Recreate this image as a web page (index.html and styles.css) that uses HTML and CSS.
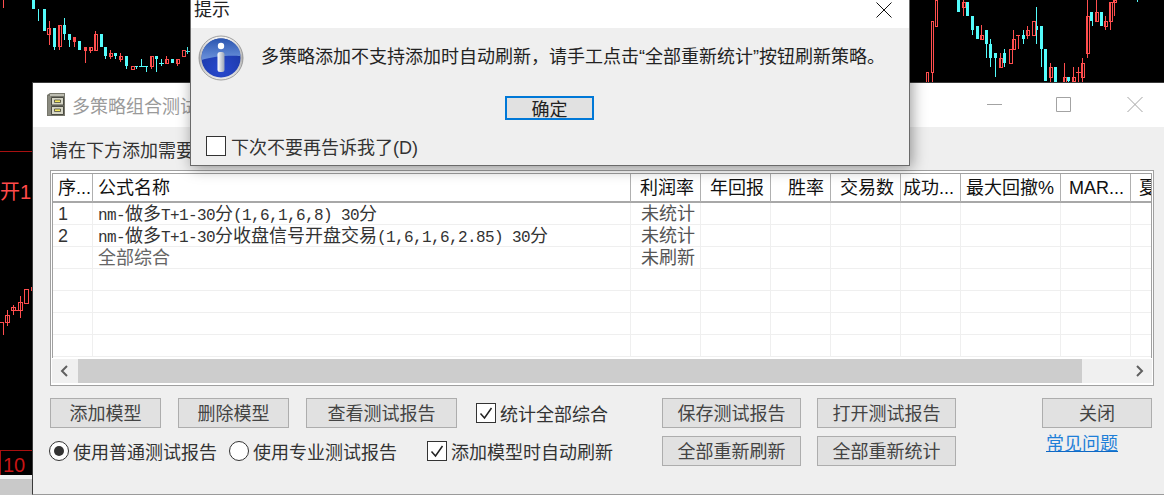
FILE: index.html
```html
<!DOCTYPE html>
<html lang="zh-CN">
<head>
<meta charset="utf-8">
<title>多策略组合测试</title>
<link rel="stylesheet" href="styles.css">
</head>
<body>
<div class="desktop">
  <svg class="chart" width="1164" height="495" viewBox="0 0 1164 495">
    <path class="up" d="M32 0h3v9h-3zM38 9h1v12h-1zM43 9h3v22h-3zM53 28h3v19h-3zM54 47h1v3h-1zM63 25h3v9h-3zM64 18h1v22h-1zM68 34h3v6h-3zM69 40h1v7h-1zM78 41h3v9h-3zM100 34h3v13h-3zM104 47h3v9h-3zM105 56h1v3h-1zM114 53h3v3h-3zM115 56h1v3h-1zM125 56h3v10h-3zM126 66h1v3h-1zM134 66h4v1h-4zM136 66h1v3h-1zM141 59h1v8h-1zM139 66h5v1h-5zM144 66h4v1h-4zM146 66h1v6h-1zM155 56h3v3h-3zM156 59h1v13h-1zM161 59h1v7h-1zM159 63h5v1h-5zM171 59h3v4h-3zM186 51h5v1h-5zM187 47h1v7h-1z"/>
    <path class="up" d="M957 0h3v12h-3zM966 2h3v14h-3zM971 16h3v14h-3zM972 30h1v5h-1zM976 26h3v13h-3zM985 30h3v14h-3zM986 44h1v14h-1zM989 44h3v14h-3zM990 39h1v28h-1zM994 53h3v5h-3zM995 58h1v19h-1zM1003 53h3v10h-3zM1004 49h1v18h-1zM1022 35h3v4h-3zM1023 30h1v14h-1zM1035 26h3v4h-3zM1036 7h1v37h-1zM1040 26h3v23h-3zM1041 49h1v18h-1zM1044 49h3v32h-3zM1054 67h3v16h-3zM1067 77h3v4h-3zM1068 81h1v2h-1zM1090 12h3v9h-3zM1092 21h1v5h-1zM1100 12h3v14h-3zM1137 0h1v2h-1z"/>
    <path class="down" d="M3.500 0V8M49.500 21V45M47.500 28h3v6h-3zM59.500 25V50M58 25h3v21h-3zM74.500 37V47M73 37h2v4h-2zM85.500 47V63M84 47h2v3h-2zM90.500 47V53M89 47h3v3h-3zM95.500 31V50M94 34h3v16h-3zM110.500 50V59M109 53h3v3h-3zM120.500 53V62M119 56h3v3h-3zM131 66h3v3h-3zM151.500 56V69M150 56h3v10h-3zM166.500 56V63M165 59h3v4h-3zM177.500 59V66M176 59h3v4h-3zM182 50h3v6h-3z"/>
    <path class="down" d="M926 72h2v11h-2zM931 21h2v51h-2zM932.500 72V83M935 0h2v26h-2zM963.500 0V16M962 2h3v5h-3zM981.500 25V39M980 35h3v4h-3zM1000.500 53V67M999 58h3v9h-3zM1013.500 30V49M1012 39h3v10h-3zM1009 49h3v14h-3zM1018 35V49M1016 35h4M1027.500 26V39M1026 30h3v5h-3zM1032 21h3v14h-3zM1050.500 63V83M1049 67h3v10h-3zM1064.500 63V83M1063 77h3v6h-3zM1073.500 67V83M1072 77h3v4h-3zM1078.500 67V83M1076 72h5M1082.500 58V83M1081 63h3v14h-3zM1087.500 0V58M1086 16h3v37h-3zM1096.500 0V21M1095 12h3v9h-3zM1105.500 16V30M1104 21h3v5h-3zM1110.500 2V30M1109 2h3v19h-3zM1114.500 0V16M1113 0h3v2h-3z"/>
    <path class="down" d="M24.500 289h4v14h-4zM31.500 287h2v3h-2zM18.500 302h4v8h-4zM20.500 296V318M11.500 307h4v3h-4zM13.500 305V315M5.500 315h4v7h-4zM7.500 310V326M0 322h3v13M15.500 310h4"/>
    <path class="level" d="M0 151.500H33M.5 450V475M0 450.500H33"/>
  </svg>
  <span class="open-label">开1</span>
  <span class="volume-label">10</span>
  <div class="strip"></div>

  <section class="window">
    <header class="titlebar">
      <svg class="cabinet" width="18" height="24" viewBox="0 0 18 24">
        <path d="M3 0h15v23H0V2z" fill="#77776c"/>
        <path d="M3 1h14v2H3z" fill="#bcbcb0"/>
        <path d="M1 3h3v19H1z" fill="#8b8b80"/>
        <path d="M4.500 4.500h12v7.500h-12zM4.500 13.500h12v8h-12z" fill="#d6d6c6" stroke="#4a4a42"/>
        <path d="M7.500 7h6v2.500h-6zM7.500 16h6v2.500h-6z" fill="#f4e85e" stroke="#333" stroke-width=".7"/>
      </svg>
      <h1 class="window-title">多策略组合测试</h1>
      <div class="window-controls">
        <svg width="16" height="16" viewBox="0 0 16 16"><path d="M0 8.500h15" stroke="#a3a3a3" fill="none"/></svg>
        <svg width="16" height="16" viewBox="0 0 16 16"><path d="M.5 1.500h14v14H.5z" stroke="#a3a3a3" fill="none"/></svg>
        <svg class="win-close" width="16" height="16" viewBox="0 0 16 16"><path d="M.5 1l15 15M15.500 1l-15 15" stroke="#a3a3a3" fill="none"/></svg>
      </div>
    </header>
    <div class="window-body">
      <p class="hint">请在下方添加需要</p>
      <div class="frame">
        <div class="table-clip">
          <table class="grid">
            <colgroup>
              <col class="c-no"><col class="c-name"><col class="c-70"><col class="c-70"><col class="c-60"><col class="c-70"><col class="c-60"><col class="c-100"><col class="c-70"><col class="c-100">
            </colgroup>
            <thead>
              <tr>
                <th class="left">序...</th><th class="left">公式名称</th><th>利润率</th><th>年回报</th><th>胜率</th><th>交易数</th><th>成功...</th><th>最大回撤%</th><th>MAR...</th><th class="left last">夏</th>
              </tr>
            </thead>
            <tbody>
              <tr><td>1</td><td><span class="m">nm-</span>做多<span class="m">T+1-30</span>分<span class="m">(1,6,1,6,8) 30</span>分</td><td>未统计</td><td></td><td></td><td></td><td></td><td></td><td></td><td></td></tr>
              <tr><td>2</td><td><span class="m">nm-</span>做多<span class="m">T+1-30</span>分收盘信号开盘交易<span class="m">(1,6,1,6,2.85) 30</span>分</td><td>未统计</td><td></td><td></td><td></td><td></td><td></td><td></td><td></td></tr>
              <tr><td></td><td>全部综合</td><td>未刷新</td><td></td><td></td><td></td><td></td><td></td><td></td><td></td></tr>
              <tr><td></td><td></td><td></td><td></td><td></td><td></td><td></td><td></td><td></td><td></td></tr>
              <tr><td></td><td></td><td></td><td></td><td></td><td></td><td></td><td></td><td></td><td></td></tr>
              <tr><td></td><td></td><td></td><td></td><td></td><td></td><td></td><td></td><td></td><td></td></tr>
              <tr><td></td><td></td><td></td><td></td><td></td><td></td><td></td><td></td><td></td><td></td></tr>
            </tbody>
          </table>
        </div>
        <div class="scrollbar">
          <svg class="arrow" width="26" height="24" viewBox="0 0 26 24"><path d="M15 7l-5 5 5 5" fill="none" stroke="#606060" stroke-width="2"/></svg>
          <div class="track"><div class="thumb"></div></div>
          <svg class="arrow" width="26" height="24" viewBox="0 0 26 24"><path d="M11 7l5 5-5 5" fill="none" stroke="#606060" stroke-width="2"/></svg>
        </div>
      </div>
      <div class="controls">
        <div class="col-left">
          <div class="row-top">
            <button class="btn w111">添加模型</button>
            <button class="btn w111">删除模型</button>
            <button class="btn w151">查看测试报告</button>
            <label class="option check-top"><span class="box checked"><svg width="18" height="18" viewBox="0 0 18 18"><path d="M3.500 9.500l4 4.500 7-10" fill="none" stroke="#222" stroke-width="1.500"/></svg></span>统计全部综合</label>
          </div>
          <div class="row-bottom">
            <label class="option"><span class="radio on"></span>使用普通测试报告</label>
            <label class="option"><span class="radio"></span>使用专业测试报告</label>
            <label class="option check-bottom"><span class="box checked"><svg width="18" height="18" viewBox="0 0 18 18"><path d="M3.500 9.500l4 4.500 7-10" fill="none" stroke="#222" stroke-width="1.500"/></svg></span>添加模型时自动刷新</label>
          </div>
        </div>
        <div class="col-middle">
          <button class="btn">保存测试报告</button>
          <button class="btn">打开测试报告</button>
          <button class="btn">全部重新刷新</button>
          <button class="btn">全部重新统计</button>
        </div>
        <div class="col-right">
          <button class="btn w110">关闭</button>
          <a class="help" href="#">常见问题</a>
        </div>
      </div>
    </div>
  </section>

  <section class="dialog">
    <header class="dialog-title">
      <span class="dialog-name">提示</span>
      <svg width="16" height="16" viewBox="0 0 16 16"><path d="M.5.500l15 15M15.500.500l-15 15" stroke="#111" fill="none"/></svg>
    </header>
    <div class="dialog-body">
      <div class="message">
        <svg class="info" width="46" height="46" viewBox="0 0 46 46">
          <defs>
            <radialGradient id="ball" cx=".5" cy=".8" r=".75">
              <stop offset="0" stop-color="#2748cf"/>
              <stop offset=".7" stop-color="#1f3db0"/>
              <stop offset="1" stop-color="#17308c"/>
            </radialGradient>
            <linearGradient id="ring" x1="0" y1="0" x2="0" y2="1">
              <stop offset="0" stop-color="#f6f6f6"/>
              <stop offset=".5" stop-color="#b4b4b4"/>
              <stop offset="1" stop-color="#eaeaea"/>
            </linearGradient>
            <linearGradient id="gloss" x1="0" y1="0" x2="0" y2="1">
              <stop offset="0" stop-color="#2b55b0"/>
              <stop offset="1" stop-color="#6c93dc"/>
            </linearGradient>
            <linearGradient id="stem" x1="0" y1="0" x2="1" y2="0">
              <stop offset="0" stop-color="#ffffff"/>
              <stop offset="1" stop-color="#9aa3b5"/>
            </linearGradient>
          </defs>
          <circle cx="23" cy="23" r="22" fill="url(#ring)" stroke="#8a8a8a" stroke-width=".8"/>
          <circle cx="23" cy="23" r="19.500" fill="url(#ball)"/>
          <path d="M3.600 25C3 12 12 3.500 23 3.500S43 12 42.400 21C33 20 14 21 3.600 25z" fill="url(#gloss)"/>
          <circle cx="23" cy="11" r="3.200" fill="#fff"/>
          <rect x="19.500" y="17" width="7" height="20" rx="2.500" fill="url(#stem)"/>
        </svg>
        <p class="message-text">多策略添加不支持添加时自动刷新，请手工点击“全部重新统计”按钮刷新策略。</p>
      </div>
      <button class="ok">确定</button>
      <label class="option dont-ask"><span class="box"></span>下次不要再告诉我了(D)</label>
    </div>
  </section>
</div>
</body>
</html>
```
FILE: styles.css
```css
* {
  box-sizing: border-box;
}

html,
body {
  margin: 0;
  height: 100%;
}

body {
  font-family: "Liberation Sans", "Noto Sans CJK SC", sans-serif;
  font-size: 18px;
  color: #222;
  overflow: hidden;
}

.desktop {
  position: relative;
  width: 1164px;
  height: 495px;
  background: #000;
  overflow: hidden;
}

.chart {
  position: absolute;
  left: 0;
  top: 0;
  shape-rendering: crispEdges;
}

.up {
  fill: #54fcfc;
}

.down {
  fill: none;
  stroke: #ff4e4e;
  stroke-width: 1;
}

.level {
  fill: none;
  stroke: #a81010;
}

.open-label {
  position: absolute;
  left: 0;
  top: 179px;
  font-size: 20px;
  line-height: 26px;
  color: #ff4a4a;
}

.volume-label {
  position: absolute;
  left: 3px;
  top: 453px;
  font-size: 20px;
  line-height: 24px;
  color: #c81414;
}

.strip {
  position: absolute;
  left: 0;
  top: 475px;
  width: 33px;
  height: 20px;
  background: linear-gradient(#f2f2f2 0 4px, #c9c9c9 4px);
}

/* Main window */
.window {
  position: absolute;
  left: 32px;
  top: 82px;
  width: 1132px;
  height: 413px;
  background: #efefef;
  border-top: 1px solid #3a3a3a;
  border-left: 1px solid #3a3a3a;
  border-bottom: 1px solid #9a9a9a;
  display: flex;
  flex-direction: column;
}

.titlebar {
  height: 44px;
  flex: none;
  background: #fff;
  display: flex;
  align-items: center;
  padding-left: 14px;
}

.cabinet {
  flex: none;
}

.window-title {
  margin: 0 0 0 7px;
  font-size: 18px;
  font-weight: 400;
  color: #9a9a9a;
  flex: 1;
}

.window-controls {
  display: flex;
  gap: 53px;
  padding-right: 21px;
  justify-content: flex-end;
  margin-top: -3px;
}

.win-close {
  margin-left: 2px;
}

.window-body {
  flex: 1;
  padding: 0 0 0 17px;
  display: flex;
  flex-direction: column;
}

.hint {
  margin: 0;
  height: 43px;
  line-height: 48px;
  color: #333;
  white-space: nowrap;
}

.frame {
  width: 1104px;
  height: 216px;
  border: 1px solid #a0a0a0;
  padding: 2px 1px 2px 1px;
  background: #fff;
  display: flex;
  flex-direction: column;
}

.table-clip {
  flex: 1;
  overflow: hidden;
  border: solid #a0a0a0;
  border-width: 1px 1px 0 1px;
  min-height: 0;
}

.grid {
  table-layout: fixed;
  border-collapse: separate;
  border-spacing: 0;
  width: 1178px;
}

.c-no { width: 40px; }
.c-name { width: 538px; }
.c-70 { width: 70px; }
.c-60 { width: 60px; }
.c-100 { width: 100px; }

.grid th {
  height: 29px;
  padding: 0 6px 0 0;
  font-size: 18px;
  font-weight: 400;
  color: #111;
  text-align: right;
  white-space: nowrap;
  overflow: hidden;
  background: #fff;
  border-right: 1px solid #b0b0b0;
  border-bottom: 2px solid #a8a8a8;
  line-height: 24px;
}

.grid th.left {
  text-align: left;
  padding: 0 0 0 5px;
}

.grid th.last {
  padding-left: 8px;
}

.grid td {
  height: 22px;
  padding: 1px 0 0 5px;
  font-size: 18px;
  line-height: 18px;
  color: #555;
  white-space: nowrap;
  overflow: hidden;
  background: #fff;
  border-right: 1px solid #efefef;
  border-bottom: 1px solid #efefef;
}

.grid tr td:nth-child(-n+2) {
  color: #333;
}

.grid tr:nth-child(3) td:nth-child(2) {
  color: #666;
}

.grid td:nth-child(3) {
  padding-left: 10px;
}

.m {
  font-family: "Liberation Mono", monospace;
  font-size: 16px;
  letter-spacing: -.6px;
  line-height: 1;
}

.scrollbar {
  height: 24px;
  flex: none;
  display: flex;
  background: #f0f0f0;
  margin-top: 1px;
}

.arrow {
  flex: none;
}

.track {
  flex: 1;
}

.thumb {
  width: 1004px;
  height: 100%;
  background: #cdcdcd;
}

/* Control area */
.controls {
  display: flex;
  margin-top: 12px;
}

.col-left {
  width: 612px;
  flex: none;
  display: flex;
  flex-direction: column;
  gap: 10px;
}

.row-top {
  display: flex;
  gap: 17px;
  align-items: center;
  height: 30px;
}

.row-bottom {
  display: flex;
  align-items: center;
  height: 26px;
  gap: 12px;
  margin-left: -1px;
}

.col-middle {
  width: 295px;
  margin-right: 85px;
  flex: none;
  display: grid;
  grid-template-columns: 139px 139px;
  grid-template-rows: 30px 30px;
  gap: 8px 16px;
}

.col-right {
  display: flex;
  flex-direction: column;
  align-items: flex-start;
}

.btn {
  height: 30px;
  padding: 0 0 2px;
  font: inherit;
  color: #444;
  background: #e1e1e1;
  border: 1px solid #adadad;
}

.w111 { width: 111px; }
.w151 { width: 151px; }
.w110 { width: 110px; }

.help {
  margin: 3px 0 0 4px;
  color: #1f7fd8;
  line-height: 26px;
  text-decoration-color: #0d66c2;
}

.option {
  display: flex;
  align-items: center;
  gap: 4px;
  color: #333;
  white-space: nowrap;
}

.check-top {
  margin-left: 2px;
}

.check-bottom {
  margin-left: 18px;
}

.box {
  width: 20px;
  height: 20px;
  flex: none;
  background: #fff;
  border: 1px solid #333;
  display: flex;
  align-items: center;
  justify-content: center;
}

.radio {
  width: 20px;
  height: 20px;
  flex: none;
  background: #fff;
  border: 1px solid #333;
  border-radius: 50%;
  display: flex;
  align-items: center;
  justify-content: center;
}

.radio.on::after {
  content: "";
  width: 10px;
  height: 10px;
  border-radius: 50%;
  background: #333;
}

/* Message dialog */
.dialog {
  position: absolute;
  left: 190px;
  top: -1px;
  width: 720px;
  height: 167px;
  background: #efefef;
  border: 1px solid #6a6a6a;
  box-shadow: 2px 2px 14px rgba(0, 0, 0, .4);
  display: flex;
  flex-direction: column;
}

.dialog-title {
  height: 28px;
  flex: none;
  background: #fff;
  display: flex;
  align-items: flex-start;
  justify-content: space-between;
  padding: 2px 17px 0 3px;
  color: #222;
}

.dialog-name {
  margin-top: -3px;
  line-height: 22px;
}

.dialog-body {
  flex: 1;
  display: flex;
  flex-direction: column;
  align-items: flex-start;
}

.message {
  display: flex;
  align-items: center;
  margin: 7px 0 0 7px;
  height: 46px;
  gap: 17px;
}

.info {
  flex: none;
}

.message-text {
  margin: 0 0 6px;
  white-space: nowrap;
  color: #222;
}

.ok {
  width: 89px;
  height: 24px;
  margin: 15px 0 0 314px;
  padding: 2px 0 0;
  font: inherit;
  line-height: 20px;
  color: #222;
  background: #e1e1e1;
  border: 2px solid #0078d7;
}

.dont-ask {
  margin: 13px 0 0 15px;
  gap: 5px;
}
```
